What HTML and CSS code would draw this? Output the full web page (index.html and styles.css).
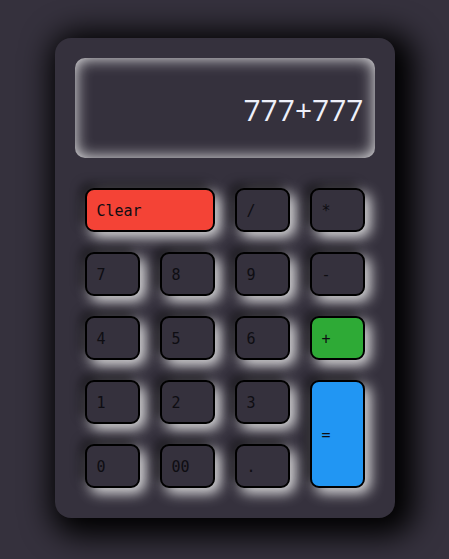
FILE: index.html
```html
<!DOCTYPE html>
<html>
<head>
<meta charset="utf-8">
<link rel="stylesheet" href="styles.css">
</head>
<body>
<div class="calc">
  <div class="display">777+777</div>
  <div class="keys">
    <button class="key wide red">Clear</button>
    <button class="key">/</button>
    <button class="key">*</button>
    <button class="key">7</button>
    <button class="key">8</button>
    <button class="key">9</button>
    <button class="key">-</button>
    <button class="key">4</button>
    <button class="key">5</button>
    <button class="key">6</button>
    <button class="key green">+</button>
    <button class="key">1</button>
    <button class="key">2</button>
    <button class="key">3</button>
    <button class="key tall blue">=</button>
    <button class="key">0</button>
    <button class="key">00</button>
    <button class="key">.</button>
  </div>
</div>
</body>
</html>
```
FILE: styles.css
```css
html, body {
  margin: 0;
  padding: 0;
  height: 100%;
}
body {
  background: #35313d;
  display: flex;
  align-items: center;
  justify-content: center;
}
.calc {
  width: 340px;
  box-sizing: border-box;
  padding: 20px 20px 30px;
  background: #35313d;
  border-radius: 16px;
  box-shadow: 8px 6px 30px 12px #000;
  margin-top: -3px;
}
.display {
  height: 100px;
  box-sizing: border-box;
  border-radius: 10px;
  background: #35313d;
  box-shadow: inset 0 0 16px rgba(255, 255, 255, 0.95);
  color: #eef0fa;
  font-family: "Open Sans", "Noto Sans", sans-serif;
  font-size: 30px;
  text-align: right;
  padding: 0 11px;
  line-height: 104px;
}
.keys {
  margin: 30px 10px 0;
  display: grid;
  grid-template-columns: repeat(4, 55px);
  grid-auto-rows: 44px;
  gap: 20px;
}
.key {
  margin: 0;
  box-sizing: border-box;
  border: 2px solid #000;
  border-radius: 9px;
  background: #35313d;
  color: #0e0d12;
  font-family: "DejaVu Sans Mono", monospace;
  font-size: 15px;
  text-align: left;
  padding: 1px 0 0 10px;
  box-shadow: -5px -5px 10px rgba(0, 0, 0, 0.5), 5px 5px 14px rgba(255, 255, 255, 0.9);
}
.wide { grid-column: span 2; }
.tall { grid-row: span 2; }
.red { background: #f44336; }
.green { background: #2eaa36; }
.blue { background: #2196f3; }
```
